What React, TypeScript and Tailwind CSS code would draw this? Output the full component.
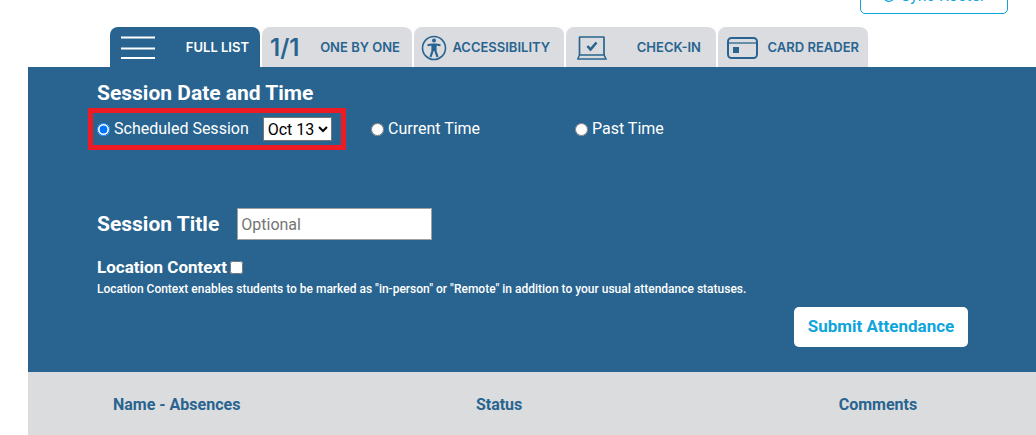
import { ReactNode, useState } from 'react';
import { twMerge } from 'tailwind-merge';

const MenuIcon = () => (
  <svg className="h-6 w-[34px]" viewBox="0 0 34 24" stroke="currentColor" strokeWidth="2.200">
    <path d="M0 1.500h34M0 12.500h34M0 22h34" />
  </svg>
);

const AccessibilityIcon = () => (
  <svg className="h-[26px] w-[26px]" viewBox="0 0 26 26" fill="none" stroke="currentColor">
    <circle cx="13" cy="13" r="11.5" strokeWidth="1.6" />
    <circle cx="13" cy="5.6" r="2" fill="currentColor" stroke="none" />
    <path d="M6.5 10.2 11 9.500h4l4.500.7" strokeWidth="2" />
    <path d="M11.500 9.500v6.500L9.500 22M14.500 9.500v6.500l2 6" strokeWidth="2.200" />
    <path d="M11 9h4v7h-4z" fill="currentColor" stroke="none" />
  </svg>
);

const LaptopIcon = () => (
  <svg className="h-6 w-[30px]" viewBox="0 0 30 24" fill="none" stroke="currentColor">
    <path d="M2.500 19V1.500Q2.500 1 3 1h23.500Q27 1 27 1.500V19" strokeWidth="1.700" />
    <path d="M2.500 19H27l2 4H.8z" strokeWidth="1.500" />
    <path d="m10.500 10 3 3.500 6-7" strokeWidth="2.600" />
  </svg>
);

const CardIcon = () => (
  <svg className="h-[22px] w-[31px]" viewBox="0 0 31 22" fill="none" stroke="currentColor">
    <rect x="1" y="1" width="29" height="20" rx="3.500" strokeWidth="2" />
    <path d="M1 6h29" strokeWidth="1.300" />
    <rect x="6" y="10" width="6" height="6" fill="currentColor" stroke="none" />
  </svg>
);

interface Tab {
  name: string;
  icon: ReactNode;
  className: string;
}

const tabs: Tab[] = [
  { name: 'FULL LIST', icon: <MenuIcon />, className: 'pl-[11px] pr-[11px]' },
  { name: 'ONE BY ONE', icon: <span className="text-2xl font-semibold">1/1</span>, className: 'pl-2 pr-3' },
  { name: 'ACCESSIBILITY', icon: <AccessibilityIcon />, className: 'pl-[7px] pr-3.5' },
  { name: 'CHECK-IN', icon: <LaptopIcon />, className: 'pl-[11px] pr-[15px]' },
  { name: 'CARD READER', icon: <CardIcon />, className: 'pl-[9px] pr-[9px]' }
];

interface RadioProps {
  id: string;
  label: string;
  value: string;
  onChange: (id: string) => void;
}

const SessionRadio = ({ id, label, value, onChange }: RadioProps) => (
  <label className="flex items-center gap-1">
    <input
      type="radio"
      name="session"
      className="h-[13px] w-[13px]"
      checked={value === id}
      onChange={() => onChange(id)}
    />
    {label}
  </label>
);

export default function App() {
  const [activeTab, setActiveTab] = useState('FULL LIST');
  const [session, setSession] = useState('scheduled');
  const [remote, setRemote] = useState(false);

  return (
    <div className="bg-white pl-7 font-[Roboto,sans-serif] text-base text-white">
      <div className="flex h-3.5 items-end justify-end overflow-hidden pr-7">
        <button className="flex h-9 w-[148px] shrink-0 items-center justify-center gap-1.5 rounded-[5px] border border-[#0fa5dc] text-[#0fa5dc]">
          <svg className="h-3 w-3" viewBox="0 0 12 12" fill="none" stroke="currentColor" strokeWidth="1.300">
            <path d="M10.500 3.500A5.200 5.200 0 1 0 11.200 6M11 1v3H8" />
          </svg>
          Sync Roster
        </button>
      </div>

      <nav className="mt-[13px] flex gap-0.5 pl-[82px] font-['Inter',sans-serif] text-[13px] font-semibold">
        {tabs.map((tab) => (
          <button
            key={tab.name}
            onClick={() => setActiveTab(tab.name)}
            className={twMerge(
              'flex h-10 w-[150px] items-center justify-between whitespace-nowrap rounded-t-lg bg-[#dbdce0] pt-0.5 text-[#28648f]',
              tab.className,
              activeTab === tab.name && 'bg-[#28648f] text-white'
            )}
          >
            {tab.icon}
            {tab.name}
          </button>
        ))}
      </nav>

      <form className="bg-[#28648f] pb-[25px] pl-[69px] pr-[68px] pt-3" onSubmit={(e) => e.preventDefault()}>
        <h2 className="text-[21px] font-bold leading-7">Session Date and Time</h2>

        <div className="mt-2.5 grid grid-cols-[274px_204px_auto] items-center">
          <div className="relative flex items-center gap-3.5">
            <SessionRadio id="scheduled" label="Scheduled Session" value={session} onChange={setSession} />
            <select aria-label="Session date" className="h-6 border border-[#767676] bg-white text-black">
              <option>Oct 13</option>
            </select>
            <div className="pointer-events-none absolute -inset-y-[9px] -left-[9px] right-[25px] border-5 border-[#ed1c24]" />
          </div>
          <SessionRadio id="current" label="Current Time" value={session} onChange={setSession} />
          <SessionRadio id="past" label="Past Time" value={session} onChange={setSession} />
        </div>

        <div className="mt-[67px] flex items-center gap-[18px]">
          <label htmlFor="title" className="text-[21px] font-bold leading-7">
            Session Title
          </label>
          <input
            id="title"
            type="text"
            placeholder="Optional"
            className="h-8 w-[195px] border border-[#a0a0a0] bg-white px-[3px] text-black placeholder:text-[#757575]"
          />
        </div>

        <label className="mt-[15px] flex items-center gap-[3px] text-[17px] font-bold leading-6">
          Location Context
          <input
            type="checkbox"
            className="h-[13px] w-[13px]"
            checked={remote}
            onChange={(e) => setRemote(e.target.checked)}
          />
        </label>
        <p className="text-xs font-medium leading-5">
          Location Context enables students to be marked as "in-person" or "Remote" in addition to your usual attendance
          statuses.
        </p>

        <div className="mt-2 flex justify-end">
          <button type="submit" className="h-10 w-[174px] rounded-[5px] bg-white text-[17px] font-bold text-[#0fa5dc]">
            Submit Attendance
          </button>
        </div>
      </form>

      <table className="w-full table-fixed bg-[#dbdcde] text-left text-[#28648f]">
        <thead>
          <tr className="h-16">
            <th className="w-[36%] pl-[85px] pt-0.5 font-bold">Name - Absences</th>
            <th className="w-[36%] pl-[85px] pt-0.5 font-bold">Status</th>
            <th className="pl-[85px] pt-0.5 font-bold">Comments</th>
          </tr>
        </thead>
      </table>
    </div>
  );
}
